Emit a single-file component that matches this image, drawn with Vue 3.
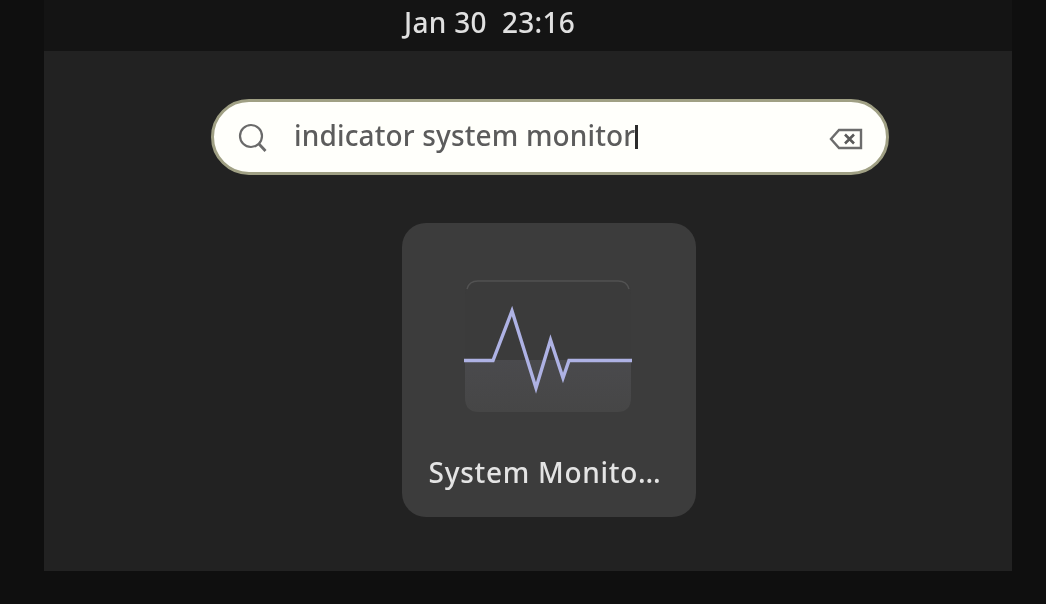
<script setup>
const pulse = "M0 80.5 H29 L48 31 L72 108 L86.5 60 L99 98 L105 80.5 H168"
</script>

<template>
  <div class="page">
    <div class="screen">
      <header class="topbar">
        <span class="clock">Jan 30&nbsp;&nbsp;23:16</span>
      </header>
      <main class="overview">
        <div class="search">
          <svg class="search-icon" width="30" height="30" viewBox="0 0 30 30" fill="none">
            <circle cx="13" cy="13" r="11" stroke="#6a6a6a" stroke-width="2.2" />
            <path d="M21 21 L27.5 28" stroke="#6a6a6a" stroke-width="2.8" />
          </svg>
          <div class="query"><span>indicator system monitor</span><i class="caret"></i></div>
          <svg class="clear-icon" width="34" height="22" viewBox="0 0 34 22" fill="none">
            <path d="M10 2 H32 V20 H10 L2 11 Z" stroke="#6c6c6c" stroke-width="2.4" />
            <path d="M16 6.5 L25 15.5 M25 6.5 L16 15.5" stroke="#5a5a5a" stroke-width="2.6" />
          </svg>
        </div>
        <div class="result">
          <svg class="app-icon" width="168" height="134" viewBox="0 0 168 134" fill="none">
            <defs>
              <linearGradient id="lower" x1="0" y1="0" x2="0" y2="1">
                <stop offset="0" stop-color="#4a4a4d" />
                <stop offset="1" stop-color="#464646" />
              </linearGradient>
            </defs>
            <path d="M14 1 H154 Q167 1 167 14 V80 H1 V14 Q1 1 14 1 Z" fill="#3b3b3b" />
            <path d="M1 80 H167 V118 Q167 132 153 132 H15 Q1 132 1 118 Z" fill="url(#lower)" />
            <path d="M3 9 Q5 1 14 1 H154 Q163 1 165 9" stroke="#525252" stroke-width="1.5" />
            <path :d="pulse" stroke="#aeb2e4" stroke-width="3.4" stroke-linejoin="miter" />
          </svg>
          <div class="label">System Monito…</div>
        </div>
      </main>
    </div>
  </div>
</template>

<style>
html, body { margin: 0; background: #0f0f0f; }
</style>

<style scoped>
.page {
  width: 1046px;
  height: 604px;
  background: #0f0f0f;
  padding-left: 44px;
  box-sizing: border-box;
  overflow: hidden;
  font-family: "Noto Sans", "Open Sans", sans-serif;
}
.screen {
  width: 968px;
  height: 571px;
  display: flex;
  flex-direction: column;
}
.topbar {
  height: 51px;
  flex: none;
  background: #141414;
  display: flex;
  align-items: center;
  padding: 0 0 7px 360px;
  box-sizing: border-box;
}
.clock {
  color: #e0e0e0;
  font-size: 28px;
  font-weight: 500;
  letter-spacing: 0.3px;
  white-space: nowrap;
  filter: blur(0.5px);
}
.overview {
  flex: 1;
  background: #222222;
  display: flex;
  flex-direction: column;
  padding-top: 48px;
  box-sizing: border-box;
}
.search {
  width: 678px;
  height: 76px;
  margin-left: 167px;
  box-sizing: border-box;
  background: #fffffb;
  border: 3px solid #a0a084;
  border-radius: 38px;
  display: flex;
  align-items: center;
  padding: 0 23px 0 24px;
  filter: blur(0.7px);
}
.search-icon { flex: none; margin-top: 2px; }
.query {
  flex: 1;
  margin-left: 26px;
  display: flex;
  align-items: center;
  color: #5c5c5c;
  font-size: 28px;
  font-weight: 500;
  letter-spacing: 0.15px;
  white-space: nowrap;
}
.query span { margin-top: -4px; }
.caret {
  width: 3px;
  height: 24px;
  background: #2c2c2c;
  margin-left: 0;
}
.clear-icon { flex: none; margin-top: 4px; }
.result {
  width: 294px;
  height: 294px;
  margin-top: 48px;
  margin-left: 358px;
  box-sizing: border-box;
  background: #3c3c3c;
  border-radius: 24px;
  display: flex;
  flex-direction: column;
  align-items: center;
  padding-top: 57px;
}
.app-icon { flex: none; margin-right: 2px; filter: blur(0.5px); }
.label {
  margin-top: 39px;
  margin-right: 8px;
  color: #e4e4e4;
  font-size: 28px;
  font-weight: 500;
  letter-spacing: 0.72px;
  white-space: nowrap;
  filter: blur(0.5px);
}
</style>
